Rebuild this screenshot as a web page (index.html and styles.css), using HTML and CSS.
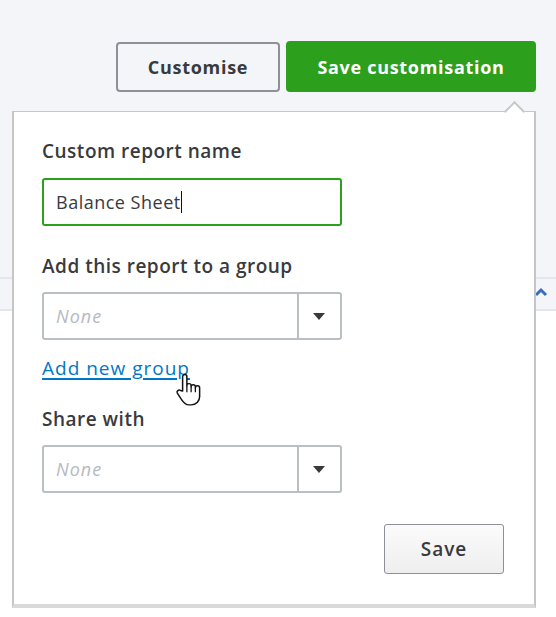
FILE: index.html
```html
<!DOCTYPE html>
<html lang="en">
<head>
    <meta charset="UTF-8">
    <meta name="viewport" content="width=device-width, initial-scale=1.0">
    <title>Customise report</title>
    <link rel="stylesheet" href="styles.css">
</head>
<body>
    <div class="page">
        <div class="toolbar">
            <button type="button" class="btn btn-outline">Customise</button>
            <button type="button" class="btn btn-green">Save customisation</button>
        </div>

        <div class="report">
            <div class="report-top"></div>
            <div class="report-head">
                <svg class="chevron" width="14" height="10" viewBox="0 0 14 10">
                    <path d="M2 8 L7 3 L12 8" fill="none" stroke="#3d6dbf" stroke-width="3"/>
                </svg>
            </div>
        </div>

        <div class="popover">
            <span class="notch"></span>

            <label class="field-label" for="reportName">Custom report name</label>
            <div class="text-input">
                <span id="reportName">Balance Sheet</span><span class="caret"></span>
            </div>

            <label class="field-label">Add this report to a group</label>
            <div class="select">
                <span class="placeholder">None</span>
                <span class="select-arrow"></span>
            </div>

            <a href="#" class="link">Add new group</a>

            <label class="field-label">Share with</label>
            <div class="select">
                <span class="placeholder">None</span>
                <span class="select-arrow"></span>
            </div>

            <div class="actions">
                <button type="button" class="btn btn-save">Save</button>
            </div>

            <svg class="hand" width="28" height="34" viewBox="0 0 26 32">
                <path d="M7 17 V3.5 a2 2 0 0 1 4 0 V12 a2 2 0 0 1 4 0 V13 a2 2 0 0 1 4 0 V14 a2 2 0 0 1 4 0 V22 c0 4 -3 8 -8 8 H13 c-3 0 -5 -2 -7 -5 L2 19 a2 2 0 0 1 3 -2.5 Z"
                      fill="#fff" stroke="#111" stroke-width="1.4" stroke-linejoin="round"/>
                <path d="M11 12 V18 M15 13 V18 M19 14 V18" stroke="#111" stroke-width="1.2" fill="none"/>
            </svg>
        </div>
    </div>
</body>
</html>
```

FILE: styles.css
```css
* {
    margin: 0;
    padding: 0;
    box-sizing: border-box;
}

body {
    font-family: 'Open Sans', 'Lato', sans-serif;
    background-color: #fff;
    color: #393a3d;
}

.page {
    position: relative;
    width: 556px;
    height: 617px;
    overflow: hidden;
}

.toolbar {
    background-color: #f4f5f8;
    display: flex;
    justify-content: flex-end;
    gap: 6px;
    padding: 41px 20px 0 0;
    height: 92px;
}

.btn {
    font-family: inherit;
    font-size: 18px;
    font-weight: 700;
    letter-spacing: 0.7px;
    border-radius: 4px;
    cursor: pointer;
}

.btn-outline {
    width: 164px;
    height: 50px;
    margin-top: 1px;
    background-color: #f4f5f8;
    border: 2px solid #8d9096;
    color: #393a3d;
}

.btn-green {
    width: 250px;
    height: 51px;
    background-color: #2ca01c;
    border: none;
    color: #fff;
}

.report-top {
    height: 185px;
    background-color: #f4f5f8;
}

.report-head {
    height: 34px;
    background-color: #f4f5f8;
    border-top: 2px solid #e3e6ec;
    border-bottom: 2px solid #e3e6ec;
    display: flex;
    justify-content: flex-end;
    align-items: center;
    padding-right: 8px;
}

.chevron {
    margin-top: -4px;
}

/* popover over the report */
.popover {
    position: absolute;
    left: 12px;
    top: 111px;
    width: 524px;
    height: 497px;
    background-color: #fff;
    border: 2px solid #c6c6c6;
    border-top-width: 1px;
    border-bottom: 4px solid #d9d9d9;
    padding: 27px 28px 0 28px;
    display: flex;
    flex-direction: column;
    align-items: flex-start;
}

.notch {
    position: absolute;
    top: -8px;
    left: 493px;
    width: 15px;
    height: 15px;
    background-color: #fff;
    border-top: 2px solid #c6c6c6;
    border-left: 2px solid #c6c6c6;
    transform: rotate(45deg);
}

.field-label {
    display: block;
    font-size: 19px;
    font-weight: 600;
    letter-spacing: 0.5px;
    line-height: 24px;
    margin-bottom: 15px;
}

.text-input,
.select {
    width: 300px;
    height: 48px;
    border-radius: 3px;
    display: flex;
    align-items: center;
    padding-left: 12px;
    font-size: 18px;
    letter-spacing: 0.5px;
    margin-bottom: 28px;
}

.text-input {
    border: 2px solid #2ca01c;
}

.caret {
    display: inline-block;
    width: 1px;
    height: 22px;
    background-color: #111;
}

.select {
    position: relative;
    border: 2px solid #babec5;
    margin-top: -1px;
}

.placeholder {
    font-style: italic;
    color: #b6b9bf;
    letter-spacing: 1px;
}

.select-arrow {
    position: absolute;
    right: 0;
    top: 0;
    width: 43px;
    height: 44px;
    border-left: 2px solid #babec5;
}

.select-arrow::after {
    content: '';
    position: absolute;
    left: 14px;
    top: 19px;
    border-left: 6px solid transparent;
    border-right: 6px solid transparent;
    border-top: 7px solid #393a3d;
}

.link {
    font-size: 19px;
    letter-spacing: 1px;
    color: #0077c5;
    line-height: 24px;
    margin: -12px 0 27px;
    text-decoration: underline;
    text-decoration-thickness: 2px;
    text-underline-offset: 3px;
}

.actions {
    align-self: stretch;
    display: flex;
    justify-content: flex-end;
    padding-right: 2px;
}

.btn-save {
    width: 120px;
    height: 50px;
    margin-top: 3px;
    border: 1px solid #8d9096;
    border-radius: 3px;
    background: linear-gradient(#fbfbfb, #eeeeee);
    color: #393a3d;
    font-size: 19px;
    font-weight: 600;
    letter-spacing: 1px;
}

.hand {
    position: absolute;
    left: 161px;
    top: 261px;
}
```
